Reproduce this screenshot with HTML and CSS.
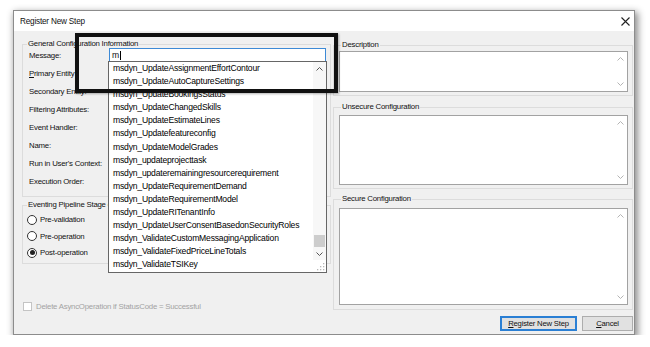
FILE: index.html
```html
<!DOCTYPE html>
<html lang="en">
<head>
    <meta charset="UTF-8">
    <title>Register New Step</title>
    <link rel="stylesheet" href="styles.css">
</head>
<body>
    <div class="page">
        <div class="dialog">
            <div class="titlebar">
                <span class="title">Register New Step</span>
                <svg class="close" width="9" height="9" viewBox="0 0 9 9">
                    <path d="M0.5 0.5 L8.5 8.5 M8.5 0.5 L0.5 8.5" stroke="#222" stroke-width="1.1" fill="none"/>
                </svg>
            </div>

            <div class="content">
                <div class="left-col">
                    <fieldset class="group general">
                        <legend>General Configuration Information</legend>
                        <div class="rows">
                            <div class="field-row">
                                <label>Message:</label>
                                <div class="field-input message-input">m<span class="caret"></span></div>
                            </div>
                            <div class="field-row">
                                <label><u>P</u>rimary Entity:</label>
                                <div class="field-input"></div>
                            </div>
                            <div class="field-row">
                                <label>Secondary Entity:</label>
                                <div class="field-input"></div>
                            </div>
                            <div class="field-row">
                                <label>Filtering Attributes:</label>
                                <div class="field-input"></div>
                            </div>
                            <div class="field-row">
                                <label>Event Handler:</label>
                                <div class="field-input"></div>
                            </div>
                            <div class="field-row">
                                <label>Name:</label>
                                <div class="field-input"></div>
                            </div>
                            <div class="field-row">
                                <label>Run in User's Context:</label>
                                <div class="field-input"></div>
                            </div>
                            <div class="field-row">
                                <label>Execution Order:</label>
                                <div class="field-input"></div>
                            </div>
                        </div>
                    </fieldset>

                    <fieldset class="group stage">
                        <legend>Eventing Pipeline Stage of Execution</legend>
                        <div class="radio-row"><span class="radio"></span>Pre-validation</div>
                        <div class="radio-row"><span class="radio"></span>Pre-operation</div>
                        <div class="radio-row"><span class="radio checked"></span>Post-operation</div>
                    </fieldset>

                    <div class="check-row disabled">
                        <span class="checkbox"></span>Delete AsyncOperation if StatusCode = Successful
                    </div>
                </div>

                <div class="right-col">
                    <fieldset class="group side description">
                        <legend>Description</legend>
                        <div class="textbox">
                            <div class="vscroll">
                                <svg width="7" height="4" viewBox="0 0 7 4"><path d="M0.5 3.5 L3.5 0.5 L6.5 3.5" stroke="#b4b4b4" fill="none"/></svg>
                                <svg width="7" height="4" viewBox="0 0 7 4"><path d="M0.5 0.5 L3.5 3.5 L6.5 0.5" stroke="#b4b4b4" fill="none"/></svg>
                            </div>
                        </div>
                    </fieldset>

                    <fieldset class="group side unsecure">
                        <legend>Unsecure Configuration</legend>
                        <div class="textbox">
                            <div class="vscroll">
                                <svg width="7" height="4" viewBox="0 0 7 4"><path d="M0.5 3.5 L3.5 0.5 L6.5 3.5" stroke="#b4b4b4" fill="none"/></svg>
                                <svg width="7" height="4" viewBox="0 0 7 4"><path d="M0.5 0.5 L3.5 3.5 L6.5 0.5" stroke="#b4b4b4" fill="none"/></svg>
                            </div>
                        </div>
                    </fieldset>

                    <fieldset class="group side secure">
                        <legend>Secure Configuration</legend>
                        <div class="textbox">
                            <div class="vscroll">
                                <svg width="7" height="4" viewBox="0 0 7 4"><path d="M0.5 3.5 L3.5 0.5 L6.5 3.5" stroke="#b4b4b4" fill="none"/></svg>
                                <svg width="7" height="4" viewBox="0 0 7 4"><path d="M0.5 0.5 L3.5 3.5 L6.5 0.5" stroke="#b4b4b4" fill="none"/></svg>
                            </div>
                        </div>
                    </fieldset>

                    <div class="buttons">
                        <button type="button" class="btn default"><u>R</u>egister New Step</button>
                        <button type="button" class="btn cancel"><u>C</u>ancel</button>
                    </div>
                </div>
            </div>

            <!-- autocomplete list opened under the Message box -->
            <div class="dropdown">
                <ul class="options">
                    <li>msdyn_UpdateAssignmentEffortContour</li>
                    <li>msdyn_UpdateAutoCaptureSettings</li>
                    <li>msdyn_UpdateBookingsStatus</li>
                    <li>msdyn_UpdateChangedSkills</li>
                    <li>msdyn_UpdateEstimateLines</li>
                    <li>msdyn_Updatefeatureconfig</li>
                    <li>msdyn_UpdateModelGrades</li>
                    <li>msdyn_updateprojecttask</li>
                    <li>msdyn_updateremainingresourcerequirement</li>
                    <li>msdyn_UpdateRequirementDemand</li>
                    <li>msdyn_UpdateRequirementModel</li>
                    <li>msdyn_UpdateRITenantInfo</li>
                    <li>msdyn_UpdateUserConsentBasedonSecurityRoles</li>
                    <li>msdyn_ValidateCustomMessagingApplication</li>
                    <li>msdyn_ValidateFixedPriceLineTotals</li>
                    <li>msdyn_ValidateTSIKey</li>
                </ul>
                <div class="list-scroll">
                    <div class="arrow">
                        <svg width="7" height="4" viewBox="0 0 7 4"><path d="M0.5 3.5 L3.5 0.5 L6.5 3.5" stroke="#555" fill="none"/></svg>
                    </div>
                    <div class="track"><div class="thumb"></div></div>
                    <div class="arrow">
                        <svg width="7" height="4" viewBox="0 0 7 4"><path d="M0.5 0.5 L3.5 3.5 L6.5 0.5" stroke="#555" fill="none"/></svg>
                    </div>
                    <div class="grip">
                        <svg width="8" height="8" viewBox="0 0 8 8" fill="#b8b8b8">
                            <rect x="6" y="0" width="1.3" height="1.3"/>
                            <rect x="3" y="3" width="1.3" height="1.3"/>
                            <rect x="6" y="3" width="1.3" height="1.3"/>
                            <rect x="0" y="6" width="1.3" height="1.3"/>
                            <rect x="3" y="6" width="1.3" height="1.3"/>
                            <rect x="6" y="6" width="1.3" height="1.3"/>
                        </svg>
                    </div>
                </div>
            </div>

            <div class="callout"></div>
        </div>
    </div>
</body>
</html>
```

FILE: styles.css
```css
body {
    margin: 0;
    background-color: #fff;
    color: #111;
    font-family: "Liberation Sans", Arial, sans-serif;
    font-size: 7.8px;
    letter-spacing: -0.22px;
}

.page {
    padding: 10px 0 0 13px;
}

.dialog {
    position: relative;
    width: 622px;
    height: 325px;
    box-sizing: border-box;
    border: 1px solid #8c8c8c;
    background-color: #f0f0f0;
    box-shadow: 2px 3px 7px 1px rgba(0, 0, 0, 0.45);
}

/* title bar */
.titlebar {
    display: flex;
    align-items: center;
    height: 20px;
    padding: 0 4px 0 6px;
    background-color: #fff;
}

.title {
    font-size: 8.2px;
    letter-spacing: -0.2px;
}

.close {
    margin-left: auto;
}

.content {
    display: flex;
    gap: 2px;
    padding: 8px 1px 0 8px;
}

.left-col {
    width: 309px;
    display: flex;
    flex-direction: column;
}

.right-col {
    width: 300px;
    display: flex;
    flex-direction: column;
    padding-top: 1px;
}

/* group boxes */
.group {
    margin: 0;
    min-width: 0;
    border: 1px solid #dcdcdc;
    padding: 0 3px 6px 6px;
}

.group legend {
    margin-left: -2px;
    padding: 0 1px;
    line-height: 10px;
    white-space: nowrap;
}

.general .rows {
    margin-top: -3px;
}

.field-row {
    display: flex;
    align-items: center;
    height: 18px;
}

.field-row label {
    width: 80px;
    flex-shrink: 0;
    white-space: nowrap;
}

.field-input {
    width: 217px;
    height: 14px;
    box-sizing: border-box;
    border: 1px solid #7a7a7a;
    background-color: #fff;
}

.message-input {
    display: flex;
    align-items: center;
    padding-left: 2px;
    border-color: #3d8ad6;
    font-size: 8.6px;
    letter-spacing: -0.2px;
}

.caret {
    width: 1px;
    height: 9px;
    margin-left: 1px;
    background-color: #000;
}

.stage {
    margin-top: 3px;
    padding-top: 1.5px;
    padding-bottom: 1.5px;
}

.radio-row {
    display: flex;
    align-items: center;
    height: 16.5px;
    margin-left: -2px;
}

.radio {
    width: 10px;
    height: 10px;
    box-sizing: border-box;
    margin-right: 3px;
    border: 1px solid #333;
    border-radius: 50%;
    background-color: #fff;
    display: flex;
    align-items: center;
    justify-content: center;
}

.radio.checked::after {
    content: "";
    width: 5px;
    height: 5px;
    border-radius: 50%;
    background-color: #222;
}

.check-row {
    display: flex;
    align-items: center;
    height: 11px;
    margin-top: 37px;
    margin-left: 1px;
}

.checkbox {
    width: 9px;
    height: 9px;
    box-sizing: border-box;
    margin-right: 4px;
    border: 1px solid #c4c4c4;
    background-color: #fff;
}

.disabled {
    color: #a3a3a3;
}

/* right side text areas */
.side {
    padding: 1px 4px 3px 5px;
}

.side legend {
    margin-left: 2px;
}

.textbox {
    display: flex;
    justify-content: flex-end;
    box-sizing: border-box;
    border: 1px solid #a2a2a2;
    background-color: #fff;
}

.description .textbox {
    height: 41px;
}

.unsecure {
    margin-top: 6px;
    padding-top: 3px;
}

.unsecure .textbox {
    height: 70px;
}

.secure {
    margin-top: 5px;
    padding-top: 4px;
    padding-bottom: 4px;
}

.secure .textbox {
    height: 97px;
}

.vscroll {
    width: 13px;
    display: flex;
    flex-direction: column;
    justify-content: space-between;
    align-items: center;
    padding: 5px 0;
}

.buttons {
    display: flex;
    justify-content: flex-end;
    gap: 5px;
    margin-top: 6px;
}

.btn {
    height: 15px;
    padding: 0;
    font-family: inherit;
    font-size: 7.7px;
    letter-spacing: -0.2px;
    color: #111;
    background-color: #e1e1e1;
    border: 1px solid #adadad;
}

.btn.default {
    width: 77px;
    border-color: #2a7fd4;
    box-shadow: inset 0 0 0 1px #2a7fd4;
}

.btn.cancel {
    width: 51px;
}

/* autocomplete list */
.dropdown {
    position: absolute;
    left: 94px;
    top: 50px;
    width: 219px;
    height: 212px;
    box-sizing: border-box;
    display: flex;
    border: 1px solid #666;
    background-color: #fff;
    color: #000;
    font-size: 8.6px;
    letter-spacing: -0.2px;
}

.options {
    flex: 1;
    margin: 0;
    padding: 0;
    list-style: none;
}

.options li {
    height: 13.1px;
    line-height: 13.1px;
    padding-left: 4px;
    white-space: nowrap;
}

.list-scroll {
    width: 13px;
    display: flex;
    flex-direction: column;
    background-color: #f7f7f7;
}

.list-scroll .arrow {
    height: 13px;
    display: flex;
    align-items: center;
    justify-content: center;
}

.track {
    flex: 1;
    display: flex;
    flex-direction: column;
    justify-content: flex-end;
}

.thumb {
    height: 12px;
    margin: 0 1px;
    background-color: #cdcdcd;
}

.grip {
    height: 11px;
    display: flex;
    align-items: flex-end;
    justify-content: flex-end;
    padding: 0 1px 1px 0;
    background-color: #fff;
}

/* black highlight frame */
.callout {
    position: absolute;
    left: 61px;
    top: 22px;
    width: 263px;
    height: 60px;
    box-sizing: border-box;
    border: 4px solid #111;
    box-shadow: 1px 1px 2px rgba(0, 0, 0, 0.3);
}
```
